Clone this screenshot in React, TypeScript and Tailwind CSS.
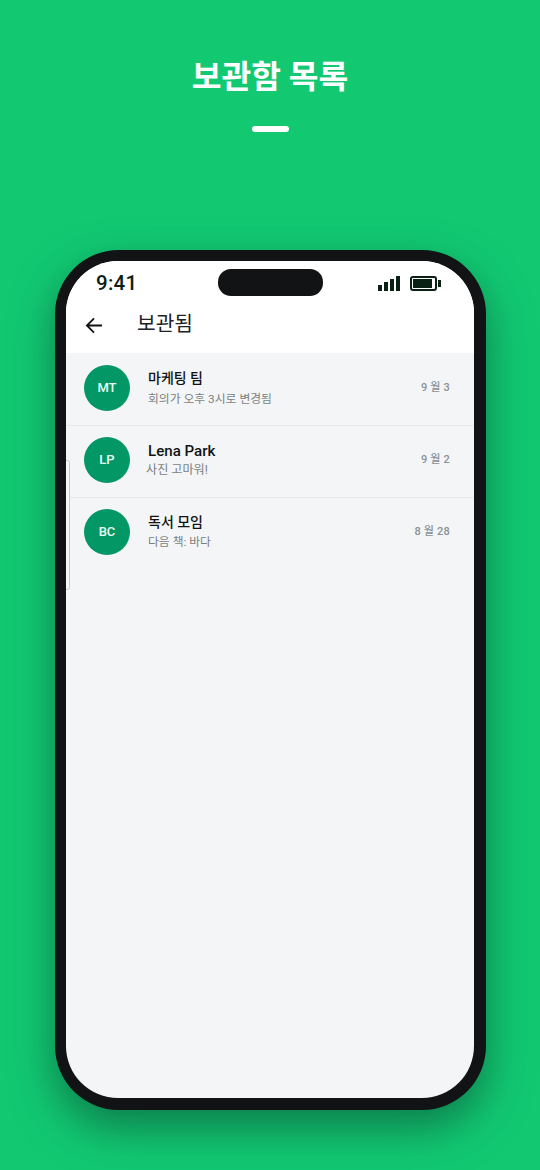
interface Chat {
  initials: string;
  name: string;
  message: string;
  date: string;
  nameClass: string;
  messageClass: string;
  dateClass: string;
}

const chats: Chat[] = [
  {
    initials: "MT",
    name: "마케팅 팀",
    message: "회의가 오후 3시로 변경됨",
    date: "9 월 3",
    nameClass: "mt-[15px] text-[14px]",
    messageClass: "mt-[2px] text-[11.8px]",
    dateClass: "mt-[25px] mr-[24px]",
  },
  {
    initials: "LP",
    name: "Lena Park",
    message: "사진 고마워!",
    date: "9 월 2",
    nameClass: "mt-4 text-[15.1px]",
    messageClass: "-ml-[2px] text-[12.1px]",
    dateClass: "mt-[25px] mr-[24px]",
  },
  {
    initials: "BC",
    name: "독서 모임",
    message: "다음 책: 바다",
    date: "8 월 28",
    nameClass: "mt-[15px] text-[14px]",
    messageClass: "mt-px text-[11.8px]",
    dateClass: "mt-[25px] mr-[24px]",
  },
];

function StatusBar() {
  return (
    <div className="flex h-[43px] items-start text-[#0b2015]">
      <p className="mt-[9px] ml-[30px] w-[122px] text-[20.5px] leading-[26px] font-medium tracking-[0.25px]">
        9:41
      </p>
      <div className="mt-2 h-[27px] w-[105px] rounded-[13px] bg-[#111315]" />
      <div className="mt-[15px] ml-[55px] flex h-[15px] items-end gap-[2px]">
        <span className="h-[6px] w-1 bg-[#0b2015]" />
        <span className="h-[9px] w-1 bg-[#0b2015]" />
        <span className="h-[12px] w-1 bg-[#0b2015]" />
        <span className="h-[15px] w-1 bg-[#0b2015]" />
      </div>
      <div className="mt-[15px] ml-[10px] flex items-center gap-[1px]">
        <div className="h-[15px] w-[27px] rounded-[3px] border-2 border-[#0b2015] p-[1px]">
          <div className="h-[9px] w-[19px] bg-[#0b2015]" />
        </div>
        <span className="h-[7px] w-[3px] bg-[#0b2015]" />
      </div>
    </div>
  );
}

function Header() {
  return (
    <div className="flex h-[49px] items-start">
      <svg
        className="mt-[12px] ml-[19px] h-[18px] w-[18px]"
        viewBox="0 0 18 18"
        fill="none"
        stroke="#111315"
        strokeWidth="1.8"
      >
        <path d="M17 9.5H2.2M9 2.4L1.9 9.5L9 16.6" />
      </svg>
      <p className="mt-[6px] ml-[34px] text-[20.3px] leading-[28px] text-[#202124]">
        보관됨
      </p>
    </div>
  );
}

function ChatRow({ chat }: { chat: Chat }) {
  return (
    <div className="flex h-[72px] items-start">
      <div className="mt-3 ml-[18px] flex h-[46px] w-[46px] items-center justify-center rounded-full bg-[#049766] text-[13px] font-medium text-[#e8fff6]">
        {chat.initials}
      </div>
      <div className="ml-[18px] flex-1">
        <p
          className={`leading-5 font-medium text-[#111315] ${chat.nameClass}`}
        >
          {chat.name}
        </p>
        <p className={`leading-[18px] text-[#7b7f82] ${chat.messageClass}`}>
          {chat.message}
        </p>
      </div>
      <p
        className={`text-[11px] leading-5 font-medium tracking-[0.2px] text-[#8b9196] ${chat.dateClass}`}
      >
        {chat.date}
      </p>
    </div>
  );
}

function Phone() {
  return (
    <div className="mt-[118px] ml-[55px] h-[860px] w-[431px] rounded-[64px] border-t-[11px] border-r-[12px] border-b-[12px] border-l-[11px] border-[#111315] bg-[#111315] shadow-[0_18px_44px_rgba(10,50,40,0.5)]">
      <div className="relative h-full overflow-hidden rounded-[52px] bg-[#f3f5f7]">
        <div className="bg-white">
          <StatusBar />
          <Header />
        </div>
        {chats.map((chat, i) => (
          <div key={chat.initials}>
            {i > 0 && <div className="-mb-px h-px bg-[#e6e9eb]" />}
            <ChatRow chat={chat} />
          </div>
        ))}
        {/* edge handle over the list */}
        <div className="absolute top-[199px] -left-1 h-[130px] w-[8px] rounded-[3px] border border-[#c5c7c9] bg-[#f7f8f9]" />
      </div>
    </div>
  );
}

function App() {
  return (
    <div className="h-[1170px] w-[540px] overflow-hidden bg-[#12c972] font-['Roboto','Noto_Sans_CJK_KR',sans-serif]">
      <h1 className="pt-[53px] text-center text-[32.3px] leading-[48px] font-bold text-white">
        보관함 목록
      </h1>
      <div className="mt-[25px] ml-[252px] h-[6px] w-[37px] rounded-full bg-white" />
      <Phone />
    </div>
  );
}

export default App;
